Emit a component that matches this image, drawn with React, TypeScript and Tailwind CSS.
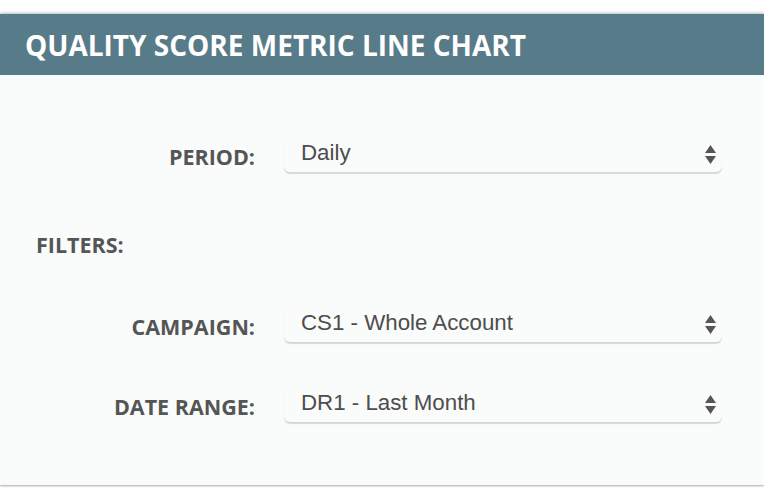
import React from "react";

const Arrows = () => (
  <svg width="11" height="20" viewBox="0 0 11 20" className="shrink-0">
    <path d="M5.5 0 L11 8 L0 8 Z" fill="#555555" />
    <path d="M0 11 L11 11 L5.5 19 Z" fill="#555555" />
  </svg>
);

const Select = ({ value }: { value: string }) => (
  <div className="ml-[29px] flex h-[34px] w-[438px] items-center justify-between rounded-[6px] bg-[#fafbfb] pl-[17px] pr-[6px] shadow-[0_1.5px_1px_rgba(0,0,0,0.14)]">
    <span
      className="text-[22.3px] leading-none text-[#4d4d4d] -translate-y-[2px]"
      style={{ fontFamily: '"Liberation Sans", Arial, sans-serif' }}
    >
      {value}
    </span>
    <Arrows />
  </div>
);

const Row = ({ label, value, className }: { label: string; value: string; className?: string }) => (
  <div className={"flex items-end " + (className ?? "")}>
    <div className="w-[255px] pb-[3px] text-right text-[21.5px] font-bold leading-[24px] text-[#555555]">
      {label}
    </div>
    <Select value={value} />
  </div>
);

export default function App() {
  return (
    <div
      className="h-[494px] w-[764px] overflow-hidden bg-white pt-[14px]"
      style={{ fontFamily: '"Open Sans", sans-serif' }}
    >
      <div className="shadow-[0_-1px_3px_rgba(0,0,0,0.25),0_1px_2px_rgba(0,0,0,0.3)]">
        <div className="flex h-[61px] items-center bg-[#587b8a] pl-[25px]">
          <h1 className="text-[28px] font-bold leading-none text-white">
            QUALITY SCORE METRIC LINE CHART
          </h1>
        </div>
        <div className="h-[410px] bg-[#fafbfb] pt-[63px]">
          <Row label="PERIOD:" value="Daily" />
          <div className="mt-[61px] pl-[36px] text-[21.5px] font-bold leading-[24px] text-[#555555]">
            FILTERS:
          </div>
          <Row label="CAMPAIGN:" value="CS1 - Whole Account" className="mt-[51px]" />
          <Row label="DATE RANGE:" value="DR1 - Last Month" className="mt-[46px]" />
        </div>
      </div>
    </div>
  );
}
